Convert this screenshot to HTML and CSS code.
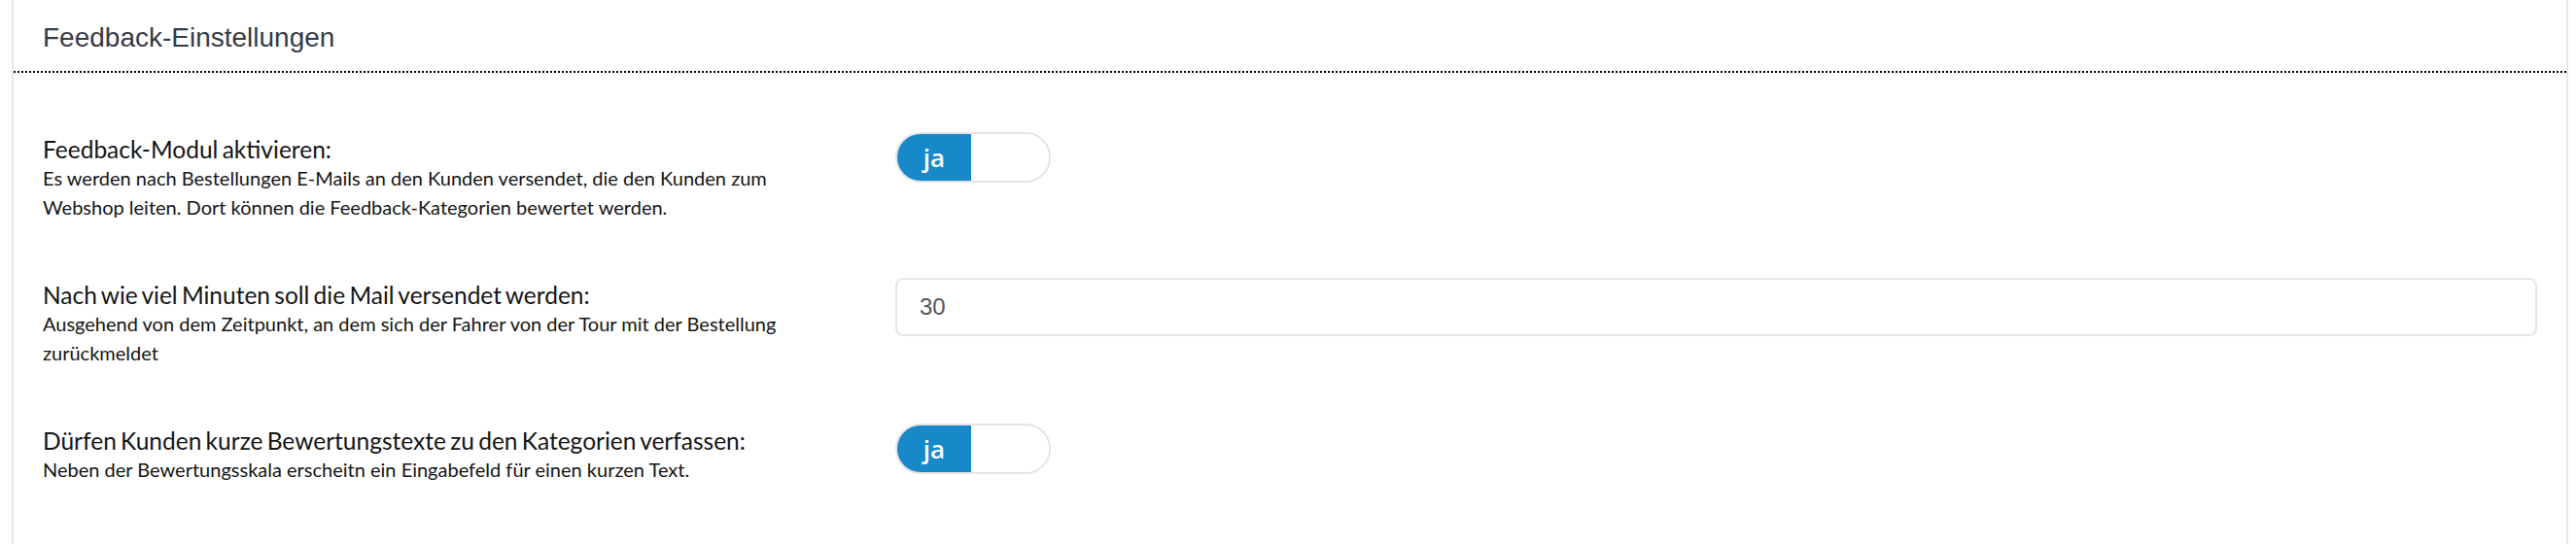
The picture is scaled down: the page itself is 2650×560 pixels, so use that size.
FILE: index.html
```html
<!DOCTYPE html>
<html lang="de">
<head>
    <meta charset="UTF-8">
    <meta name="viewport" content="width=device-width, initial-scale=1.0">
    <title>Feedback-Einstellungen</title>
    <link rel="stylesheet" href="styles.css">
</head>
<body>
    <div class="panel">
        <div class="panel-heading">
            <h2>Feedback-Einstellungen</h2>
        </div>

        <div class="panel-body">
            <div class="form-row">
                <div class="form-label">
                    <label>Feedback-Modul aktivieren:</label>
                    <p class="help">Es werden nach Bestellungen E-Mails an den Kunden versendet, die den Kunden zum Webshop leiten. Dort können die Feedback-Kategorien bewertet werden.</p>
                </div>
                <div class="form-field">
                    <div class="switch">
                        <span class="switch-on">ja</span>
                        <span class="switch-off"></span>
                    </div>
                </div>
            </div>

            <div class="form-row">
                <div class="form-label">
                    <label for="minutes">Nach wie viel Minuten soll die Mail versendet werden:</label>
                    <p class="help">Ausgehend von dem Zeitpunkt, an dem sich der Fahrer von der Tour mit der Bestellung zurückmeldet</p>
                </div>
                <div class="form-field">
                    <input type="text" id="minutes" class="text-input" value="30">
                </div>
            </div>

            <div class="form-row">
                <div class="form-label">
                    <label>Dürfen Kunden kurze Bewertungstexte zu den Kategorien verfassen:</label>
                    <p class="help">Neben der Bewertungsskala erscheitn ein Eingabefeld für einen kurzen Text.</p>
                </div>
                <div class="form-field">
                    <div class="switch">
                        <span class="switch-on">ja</span>
                        <span class="switch-off"></span>
                    </div>
                </div>
            </div>
        </div>
    </div>
</body>
</html>
```

FILE: styles.css
```css
html, body {
    height: 100%;
}
body {
    margin: 0;
    background: #fff;
    font-family: Lato, "Open Sans", sans-serif;
}
.panel {
    min-height: 100%;
    margin: 0 8px 0 12px;
    border-left: 2px solid #e8e8e8;
    border-right: 2px solid #e8e8e8;
    box-sizing: border-box;
}
.panel-heading {
    padding: 23px 30px 18px;
    border-bottom: 2px dotted #000;
}
.panel-heading h2 {
    margin: 0;
    font-family: "Liberation Sans", Arial, sans-serif;
    font-size: 28px;
    font-weight: normal;
    line-height: 32px;
    color: #353b46;
}
.panel-body {
    padding: 61px 30px 0 30px;
}
.form-row {
    display: grid;
    grid-template-columns: 877px 1fr;
    margin-bottom: 58px;
}
.form-label {
    padding-top: 4px;
    max-width: 800px;
    color: #151515;
}
.form-label label {
    display: block;
    font-size: 24.5px;
    line-height: 28px;
    word-spacing: -2px;
}
.help {
    margin: 0;
    font-size: 20px;
    line-height: 30px;
}
.switch {
    display: flex;
    width: 160px;
    height: 52px;
    box-sizing: border-box;
    border: 2px solid #e4e4e4;
    border-radius: 26px;
    overflow: hidden;
}
.switch-on {
    width: 76px;
    background: #1788c8;
    color: #fff;
    font-family: "Open Sans", sans-serif;
    font-size: 26px;
    font-weight: 600;
    line-height: 48px;
    text-align: center;
}
.switch-off {
    flex: 1;
    background: #fff;
}
.text-input {
    display: block;
    width: 100%;
    height: 60px;
    box-sizing: border-box;
    padding: 0 23px;
    border: 2px solid #e6e6e6;
    border-radius: 8px;
    font-family: "Liberation Sans", Arial, sans-serif;
    font-size: 24px;
    color: #555;
}
```
